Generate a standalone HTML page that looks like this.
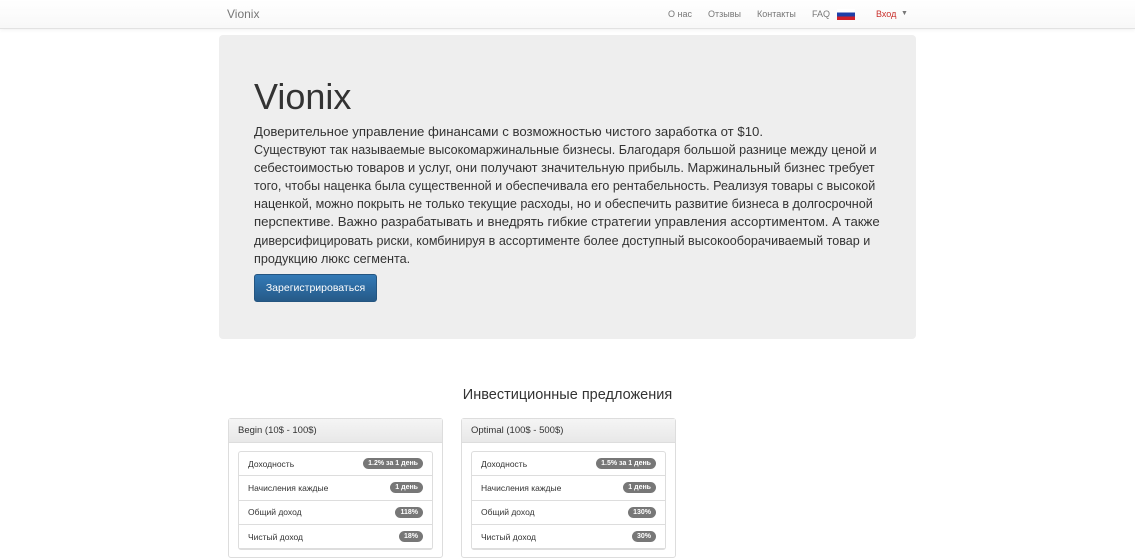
<!DOCTYPE html>
<html><head><meta charset="utf-8"><style>
*{box-sizing:border-box;margin:0;padding:0}
body{width:1135px;height:544px;overflow:hidden;background:#fff;font-family:"Liberation Sans",sans-serif;color:#333}
.nav{height:29px;background:linear-gradient(#fff,#f8f8f8);border-bottom:1px solid #e2e2e2;box-shadow:0 1px 4px rgba(0,0,0,.06);position:relative}
.brand{position:absolute;left:227px;top:7px;font-size:12px;color:#777}
.nav span{position:absolute;top:9px;font-size:9px;color:#777}
.flag{position:absolute;left:837px;top:9px;width:18px;height:11px;background:linear-gradient(#fff 0 33%,#1e3fa8 33% 66%,#d0202a 66%)}
.jumbo{position:absolute;left:219px;top:35px;width:697px;height:304px;background:#eee;border-radius:4px}
h1{position:absolute;left:254px;top:76px;font-size:36px;font-weight:400;color:#333}
.p{position:absolute;left:254px;top:123px;white-space:nowrap;font-size:13.2px;line-height:18.1px;color:#333}
.p span{display:block;transform-origin:0 50%}
.btn{position:absolute;left:254px;top:274px;width:123px;height:28px;border-radius:3px;background:linear-gradient(#337ab7,#265a88);border:1px solid #245580;color:#fff;font-size:10.5px;text-align:center;line-height:26px}
h3{position:absolute;left:0;width:1135px;top:387px;text-align:center;font-size:14.5px;font-weight:400;color:#333}
.panel{position:absolute;top:418px;width:215px;height:140px;border:1px solid #ddd;border-radius:3px;background:#fff}
.ph{height:24px;background:linear-gradient(#f5f5f5,#e8e8e8);border-bottom:1px solid #ddd;font-size:9.5px;padding:6px 9px;color:#333}
.list{margin:8px 9px 0;border:1px solid #ddd;border-radius:3px}
.li{height:24.3px;border-bottom:1px solid #ddd;font-size:8.5px;padding:0 9px;display:flex;justify-content:space-between;align-items:center;color:#333}
.b{background:#777;color:#fff;font-weight:bold;font-size:7px;border-radius:7px;padding:2px 5px}
</style></head><body>
<div class="nav"><div class="brand">Vionix</div>
<span style="left:668px">О нас</span><span style="left:708px">Отзывы</span><span style="left:757px">Контакты</span><span style="left:812px">FAQ</span><div class="flag"></div><span style="left:876px;color:#c9302c">Вход</span><span style="left:901px;font-size:7px;top:10px">▼</span></div>
<div class="jumbo"></div>
<h1>Vionix</h1>
<div class="p"><span>Доверительное управление финансами с возможностью чистого заработка от $10.</span><span style="transform:scaleX(.953)">Существуют так называемые высокомаржинальные бизнесы. Благодаря большой разнице между ценой и</span><span style="transform:scaleX(.975)">себестоимостью товаров и услуг, они получают значительную прибыль. Маржинальный бизнес требует</span><span style="transform:scaleX(.951)">того, чтобы наценка была существенной и обеспечивала его рентабельность. Реализуя товары с высокой</span><span style="transform:scaleX(.954)">наценкой, можно покрыть не только текущие расходы, но и обеспечить развитие бизнеса в долгосрочной</span><span>перспективе. Важно разрабатывать и внедрять гибкие стратегии управления ассортиментом. А также</span><span style="transform:scaleX(.951)">диверсифицировать риски, комбинируя в ассортименте более доступный высокооборачиваемый товар и</span><span style="transform:scaleX(.957)">продукцию люкс сегмента.</span></div>
<div class="btn">Зарегистрироваться</div>
<h3>Инвестиционные предложения</h3>
<div class="panel" style="left:228px"><div class="ph">Begin (10$ - 100$)</div><div class="list">
<div class="li">Доходность<span class="b">1.2% за 1 день</span></div>
<div class="li">Начисления каждые<span class="b">1 день</span></div>
<div class="li">Общий доход<span class="b">118%</span></div>
<div class="li">Чистый доход<span class="b">18%</span></div></div></div>
<div class="panel" style="left:461px"><div class="ph">Optimal (100$ - 500$)</div><div class="list">
<div class="li">Доходность<span class="b">1.5% за 1 день</span></div>
<div class="li">Начисления каждые<span class="b">1 день</span></div>
<div class="li">Общий доход<span class="b">130%</span></div>
<div class="li">Чистый доход<span class="b">30%</span></div></div></div>
</body></html>
